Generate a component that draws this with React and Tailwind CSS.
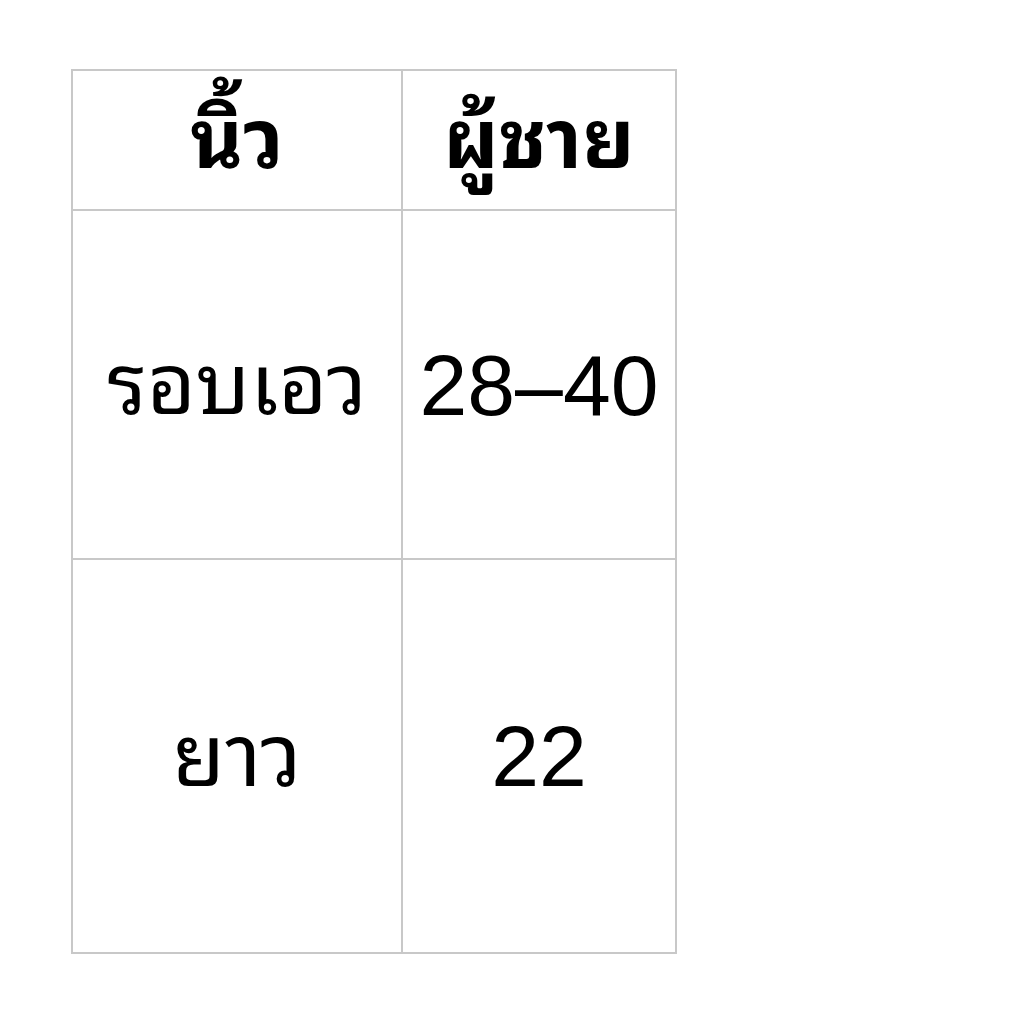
export default function App() {
  const font = { fontFamily: '"Liberation Sans", "Noto Sans Thai Looped", "Loma", "Garuda", "Thonburi", "Tahoma", "Noto Sans Thai", "Noto Sans", sans-serif' };
  return (
    <div className="w-[1024px] h-[1024px] bg-white pt-[69px] pl-[71px]" style={font}>
      <table className="border-collapse text-black">
        <tbody>
          <tr className="h-[140px]">
            <th className="w-[330px] border-2 border-[#c8c8c8] text-center align-middle text-[81px] font-bold leading-none">นิ้ว</th>
            <th className="w-[274px] border-2 border-[#c8c8c8] text-center align-middle text-[81px] font-bold leading-none">ผู้ชาย</th>
          </tr>
          <tr className="h-[349px]">
            <td className="border-2 border-[#c8c8c8] text-center align-middle text-[84px] leading-none">รอบเอว</td>
            <td className="border-2 border-[#c8c8c8] text-center align-middle text-[86px] leading-none">28–40</td>
          </tr>
          <tr className="h-[394px]">
            <td className="border-2 border-[#c8c8c8] text-center align-middle text-[86px] leading-none">ยาว</td>
            <td className="border-2 border-[#c8c8c8] text-center align-middle text-[86px] leading-none">22</td>
          </tr>
        </tbody>
      </table>
    </div>
  );
}
